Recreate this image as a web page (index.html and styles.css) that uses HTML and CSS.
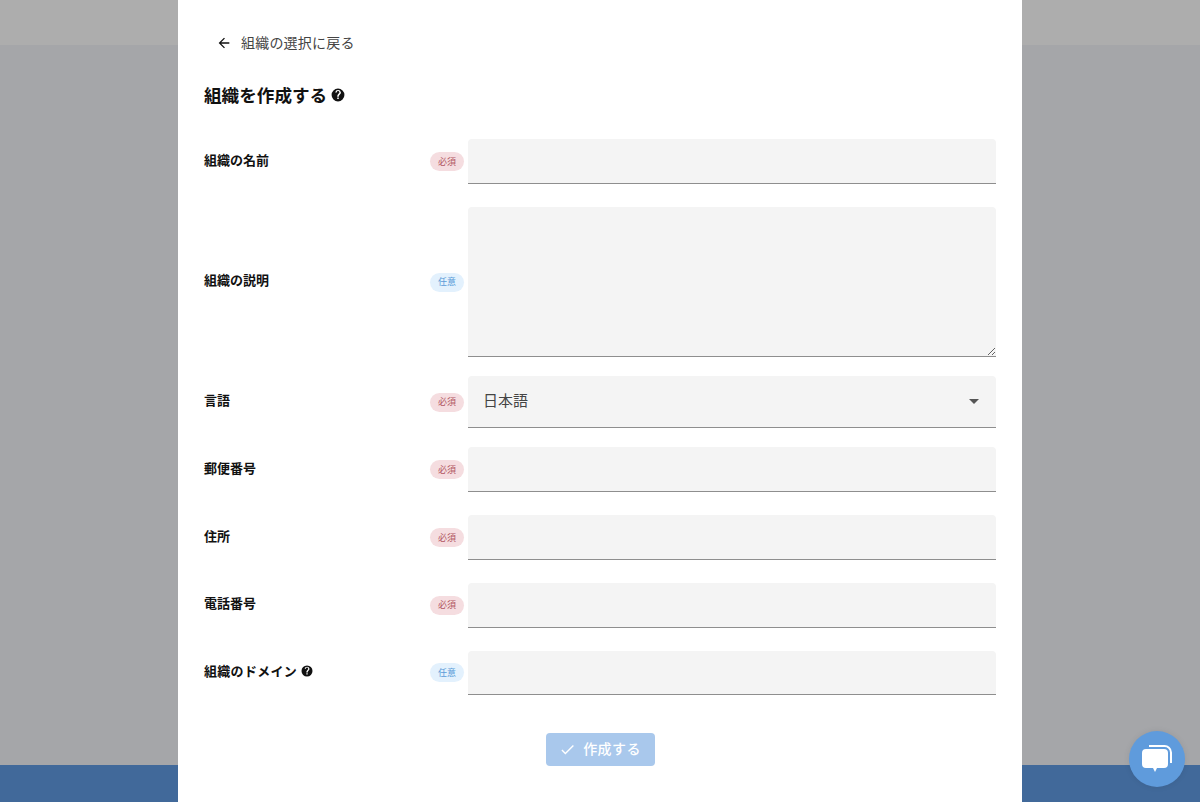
FILE: index.html
```html
<!DOCTYPE html>
<html lang="ja">
<head>
    <meta charset="UTF-8">
    <title>組織を作成する</title>
    <link rel="stylesheet" href="styles.css">
</head>
<body>
    <div class="backdrop">
        <div class="band-top"></div>
        <div class="band-mid"></div>
        <div class="band-bottom"></div>
    </div>

    <div class="dialog">
        <a class="back" href="#">
            <svg class="back-icon" viewBox="0 0 24 24" width="16" height="16"><path d="M20 11H7.830l5.590-5.590L12 4l-8 8 8 8 1.410-1.410L7.830 13H20z"/></svg>
            <span>組織の選択に戻る</span>
        </a>
        <h1 class="title">組織を作成する
            <svg class="help" viewBox="0 0 24 24" width="14" height="14"><path d="M12 1a11 11 0 1 0 0 22 11 11 0 0 0 0-22zm1.300 18h-2.600v-2.600h2.600V19zm2.600-8.600-1.100 1.200c-.9.9-1.400 1.600-1.400 3.200h-2.700v-.6c0-1.300.5-2.500 1.400-3.400l1.600-1.700c.5-.4.700-1 .7-1.600a2.300 2.300 0 0 0-4.600 0H7.200a5 5 0 0 1 9.800 0c0 1.100-.5 2.100-1.100 2.900z"/></svg>
        </h1>

        <form class="form">
            <div class="row r-first">
                <label class="label">組織の名前</label>
                <span class="badge req">必須</span>
                <input class="field" type="text">
            </div>
            <div class="row r-wide">
                <label class="label">組織の説明</label>
                <span class="badge opt">任意</span>
                <textarea class="field area"></textarea>
            </div>
            <div class="row r-tight">
                <label class="label">言語</label>
                <span class="badge req">必須</span>
                <div class="field select">
                    <span>日本語</span>
                    <svg viewBox="0 0 10 5" width="10" height="5"><path d="M0 0h10L5 5z"/></svg>
                </div>
            </div>
            <div class="row r-tight">
                <label class="label">郵便番号</label>
                <span class="badge req">必須</span>
                <input class="field" type="text">
            </div>
            <div class="row r-wide">
                <label class="label">住所</label>
                <span class="badge req">必須</span>
                <input class="field" type="text">
            </div>
            <div class="row r-wide">
                <label class="label">電話番号</label>
                <span class="badge req">必須</span>
                <input class="field short" type="text">
            </div>
            <div class="row r-wide">
                <label class="label domain">組織のドメイン
                    <svg class="help" viewBox="0 0 24 24" width="12" height="12"><path d="M12 1a11 11 0 1 0 0 22 11 11 0 0 0 0-22zm1.300 18h-2.600v-2.600h2.600V19zm2.600-8.600-1.100 1.200c-.9.9-1.400 1.600-1.400 3.200h-2.700v-.6c0-1.300.5-2.500 1.400-3.400l1.600-1.700c.5-.4.700-1 .7-1.600a2.300 2.300 0 0 0-4.600 0H7.200a5 5 0 0 1 9.800 0c0 1.100-.5 2.100-1.100 2.900z"/></svg>
                </label>
                <span class="badge opt">任意</span>
                <input class="field short" type="text">
            </div>
            <div class="actions">
                <button class="submit" type="button">
                    <svg viewBox="0 0 24 24" width="17" height="17"><path d="M9 16.170 4.830 12l-1.420 1.410L9 19 21 7l-1.410-1.410z"/></svg>
                    <span>作成する</span>
                </button>
            </div>
        </form>
    </div>

    <div class="chat">
        <svg viewBox="0 0 32 32" width="32" height="32">
            <path class="chat-back" d="M8 3h15a6.500 6.500 0 0 1 7 6.500V20"/>
            <path class="chat-front" d="M5 6h18a4 4 0 0 1 4 4v11a4 4 0 0 1-4 4h-7l-2 4-2-4H5a4 4 0 0 1-4-4V10a4 4 0 0 1 4-4z"/>
        </svg>
    </div>
</body>
</html>
```

FILE: styles.css
```css
*{
    margin:0;
    padding:0;
    box-sizing:border-box;
}
html,body{
    height:100%;
    overflow:hidden;
}
body{
    font-family:"Noto Sans CJK JP","Liberation Sans",sans-serif;
    color:#111;
    background:#a5a6a9;
}
.backdrop{
    display:flex;
    flex-direction:column;
    height:100%;
}
.band-top{
    height:45px;
    background:#adadad;
}
.band-mid{
    flex:1;
    background:#a5a6a9;
}
.band-bottom{
    height:37px;
    background:#41699a;
}
.dialog{
    position:absolute;
    left:178px;
    top:0;
    width:844px;
    height:802px;
    padding:0 26px;
    background:#fff;
}
.back{
    display:flex;
    align-items:center;
    gap:9px;
    height:20px;
    margin:33px 0 0 12px;
    font-size:14px;
    line-height:20px;
    letter-spacing:.2px;
    color:#444;
    text-decoration:none;
}
.back span{
    padding-bottom:3px;
}
.back-icon{
    fill:#111;
}
.title{
    display:flex;
    align-items:center;
    gap:4px;
    height:28px;
    margin-top:28px;
    padding-bottom:2px;
    font-size:17.6px;
    font-weight:700;
    color:#111;
}
.title .help{
    margin-top:2px;
}
.help{
    fill:#111;
}
.form{
    display:flex;
    flex-direction:column;
}
.row{
    display:grid;
    grid-template-columns:222px 34px 528px;
    column-gap:4px;
    align-items:center;
}
.r-first{
    margin-top:30px;
}
.r-wide{
    margin-top:23px;
}
.r-tight{
    margin-top:19px;
}
.label{
    display:flex;
    align-items:center;
    gap:4px;
    padding-bottom:5px;
    font-size:13px;
    font-weight:700;
    color:#111;
}
.domain{
    letter-spacing:.3px;
    gap:4px;
}
.domain .help{
    margin-top:1px;
}
.badge{
    display:flex;
    align-items:center;
    justify-content:center;
    height:19px;
    padding-bottom:1px;
    border-radius:10px;
    font-size:9px;
}
.req{
    background:#f5dde0;
    color:#b2555f;
}
.opt{
    background:#e3f1fd;
    color:#5b9bd8;
}
.field{
    display:block;
    width:528px;
    height:45px;
    border:0;
    border-bottom:1px solid #8e8e8e;
    border-radius:4px 4px 0 0;
    background:#f4f4f4;
    outline:none;
    font-family:inherit;
}
.short{
    height:44.500px;
}
.area{
    height:150px;
    resize:vertical;
}
.select{
    display:flex;
    align-items:center;
    justify-content:space-between;
    height:52px;
    padding:0 17px 4px 15px;
    font-size:15px;
    color:#444;
}
.select svg{
    fill:#555;
    margin-top:4px;
}
.actions{
    display:flex;
    justify-content:center;
    margin-top:38px;
}
.submit{
    display:flex;
    align-items:center;
    justify-content:center;
    gap:7px;
    width:109px;
    height:33px;
    padding-bottom:1px;
    border:0;
    border-radius:4px;
    background:#a9c8ec;
    color:#fff;
    font-family:inherit;
    font-size:14px;
    font-weight:500;
    letter-spacing:.4px;
}
.submit span{
    padding-bottom:3px;
}
.submit svg{
    fill:#fff;
}
.chat{
    position:absolute;
    left:1129px;
    top:731px;
    display:flex;
    align-items:center;
    justify-content:center;
    width:56px;
    height:56px;
    border-radius:50%;
    background:#5f9bdc;
    box-shadow:0 0 6px rgba(0,0,0,.08);
}
.chat-front{
    fill:#fff;
}
.chat-back{
    fill:none;
    stroke:#fff;
    stroke-width:2;
}
```
